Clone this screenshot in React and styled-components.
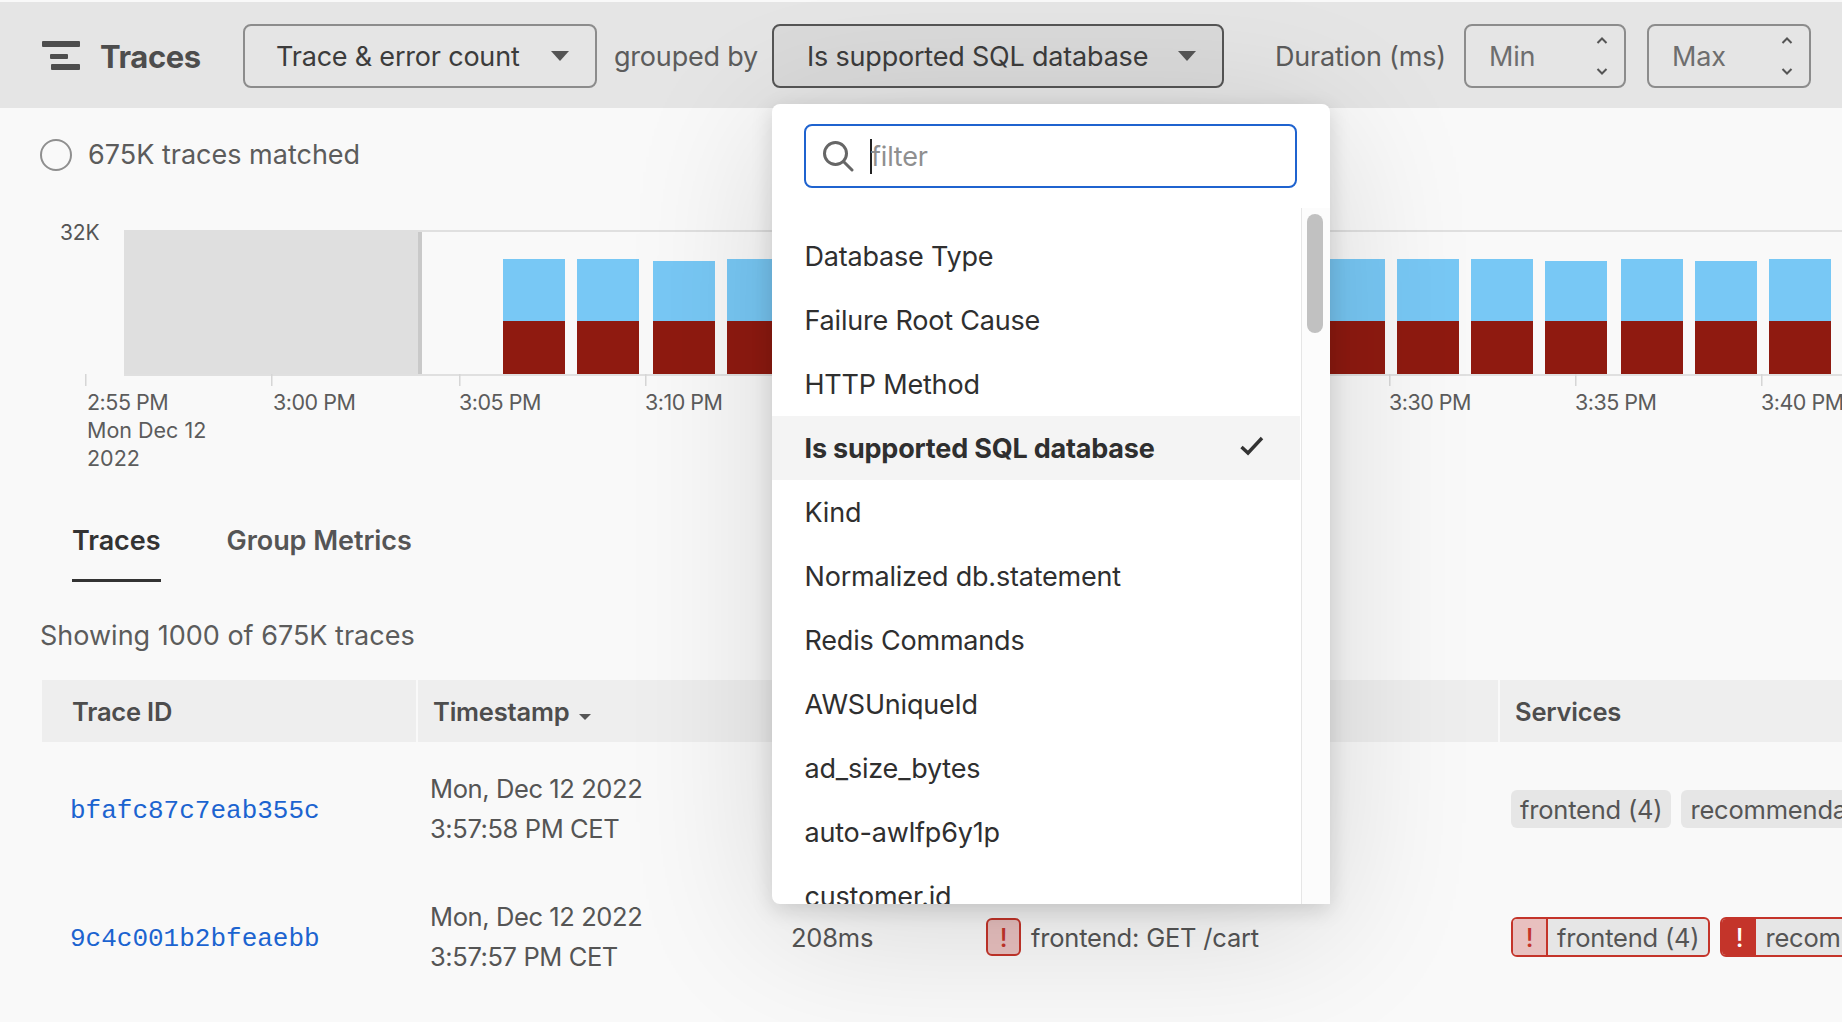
import React from "react";
import styled, { createGlobalStyle } from "styled-components";

const Global = createGlobalStyle`
  html, body { margin: 0; padding: 0; background: #f9f9f9; }
  body { font-family: Inter, "Liberation Sans", sans-serif; color: #4a4a4a; }
  * { box-sizing: border-box; }
`;

const Page = styled.div`
  position: relative;
  width: 1842px;
  height: 1022px;
  overflow: hidden;
  padding-top: 2px;
  font-size: 27px;
  letter-spacing: -0.2px;
`;

const Toolbar = styled.header`
  height: 106px;
  background: #e5e5e5;
  display: flex;
  align-items: center;
  padding: 2px 0 0 42px;
`;
const Logo = styled.svg`
  width: 38px;
  height: 30px;
  flex: none;
  margin-right: 20px;
`;
const Title = styled.h1`
  margin: 0 42px 0 0;
  width: 101px;
  font-size: 31px;
  font-weight: 700;
  letter-spacing: -0.4px;
  color: #4d4d4d;
  white-space: nowrap;
`;
const Select = styled.div`
  flex: none;
  height: 64px;
  width: ${(p) => p.$w}px;
  padding: 0 26px 0 ${(p) => p.$pl}px;
  display: flex;
  align-items: center;
  justify-content: space-between;
  border-radius: 8px;
  border: 2px solid ${(p) => (p.$open ? "#555" : "#8c8c8c")};
  background: ${(p) => (p.$open ? "#dadada" : "transparent")};
  color: #3c3c3c;
  white-space: nowrap;
  margin-right: ${(p) => p.$mr}px;
`;
const Caret = styled.span`
  flex: none;
  width: 0;
  height: 0;
  border-left: 9px solid transparent;
  border-right: 9px solid transparent;
  border-top: 10px solid #555;
`;
const Label = styled.span`
  flex: none;
  width: ${(p) => p.$w}px;
  margin-right: ${(p) => p.$mr}px;
  color: #5c5c5c;
  white-space: nowrap;
`;
const NumInput = styled.div`
  flex: none;
  width: ${(p) => p.$w}px;
  height: 64px;
  margin-right: ${(p) => p.$mr}px;
  border: 2px solid #8c8c8c;
  border-radius: 8px;
  padding: 0 15px 0 23px;
  display: flex;
  align-items: center;
  justify-content: space-between;
  color: #6e6e6e;
`;
const Steppers = styled.svg`
  width: 14px;
  height: 38px;
  flex: none;
`;

const Status = styled.div`
  height: 92px;
  margin-bottom: 2px;
  display: flex;
  align-items: center;
  padding-left: 40px;
  gap: 16px;
  color: #5c5c5c;
  letter-spacing: 0;
`;
const Spinner = styled.span`
  flex: none;
  width: 32px;
  height: 32px;
  margin-top: 2px;
  border-radius: 50%;
  border: 2px solid #8f8f8f;
`;

const Chart = styled.section`
  position: relative;
  padding-top: 28px;
`;
const YLabel = styled.span`
  position: absolute;
  left: 60px;
  top: 17px;
  font-size: 21px;
  line-height: 28px;
  color: #555;
`;
const Plot = styled.svg`
  display: block;
  width: 1842px;
  height: 156px;
`;
const XAxis = styled.div`
  display: flex;
  margin-top: 2px;
  padding-left: 87px;
`;
const XLabel = styled.div`
  flex: none;
  width: 186px;
  padding-right: 30px;
  font-size: 21.5px;
  line-height: 28px;
  letter-spacing: -0.5px;
  color: #5c5c5c;
`;
const XDate = styled.span`
  letter-spacing: 0;
`;

const Tabs = styled.nav`
  display: flex;
  gap: 66px;
  margin-top: 27px;
  padding-left: 72px;
`;
const Tab = styled.div`
  padding: 25px 0 21px;
  line-height: 34px;
  font-weight: 600;
  letter-spacing: -0.05px;
  border-bottom: 3px solid ${(p) => (p.$active ? "#333" : "transparent")};
  color: ${(p) => (p.$active ? "#333" : "#555")};
`;
const Summary = styled.div`
  margin-top: 37px;
  padding-left: 40px;
  line-height: 34px;
  color: #5c5c5c;
  letter-spacing: 0;
`;

const Table = styled.div`
  margin: 27px 0 0 42px;
  font-size: 25.5px;
`;
const COLS = "376px 358px 200px 524px 400px";
const HeadRow = styled.div`
  display: grid;
  grid-template-columns: ${COLS};
  height: 62px;
  margin-bottom: 3px;
`;
const HeadCell = styled.div`
  display: flex;
  align-items: center;
  gap: 10px;
  padding-left: ${(p) => p.$pl || 15}px;
  background: #eeeeee;
  border-right: 2px solid #f9f9f9;
  font-weight: 600;
  color: #4d4d4d;
  white-space: nowrap;
`;
const SortCaret = styled.span`
  width: 0;
  height: 0;
  margin-top: 12px;
  border-left: 6px solid transparent;
  border-right: 6px solid transparent;
  border-top: 6px solid #555;
`;
const Row = styled.div`
  display: grid;
  grid-template-columns: ${COLS};
  height: 128px;
  align-items: center;
`;
const Cell = styled.div`
  display: flex;
  align-items: center;
  padding-left: ${(p) => p.$pl || 0}px;
  gap: ${(p) => p.$gap || 0}px;
  white-space: nowrap;
  color: #555;
  min-width: 0;
`;
const TraceLink = styled.a`
  margin-top: 4px;
  font-family: "Liberation Mono", "DejaVu Sans Mono", monospace;
  font-size: 26px;
  letter-spacing: 0;
  color: #1c64d0;
`;
const Stamp = styled.div`
  line-height: 40px;
  letter-spacing: -0.4px;
`;
const ErrBox = styled.span`
  flex: none;
  width: 35px;
  height: 38px;
  display: flex;
  align-items: center;
  justify-content: center;
  border: 2px solid #c4342a;
  border-radius: 6px;
  background: #e8c0bf;
  color: #c4342a;
  font-weight: 500;
`;
const Pill = styled.span`
  flex: none;
  height: ${(p) => (p.$err ? 40 : 38)}px;
  display: inline-flex;
  align-items: stretch;
  border-radius: 6px;
  background: #e6e6e6;
  border: ${(p) => (p.$err ? "2px solid #c4342a" : "none")};
  overflow: hidden;
  color: #555;
`;
const PillFlag = styled.span`
  flex: none;
  width: ${(p) => (p.$solid ? 34 : 35)}px;
  display: flex;
  align-items: center;
  justify-content: center;
  background: ${(p) => (p.$solid ? "#c4342a" : "#e8c0bf")};
  color: ${(p) => (p.$solid ? "#fff" : "#c4342a")};
  border-right: ${(p) => (p.$solid ? "none" : "2px solid #c4342a")};
  font-weight: 500;
`;
const PillText = styled.span`
  display: flex;
  align-items: center;
  padding: 0 9px;
`;

const Dropdown = styled.div`
  position: absolute;
  left: 772px;
  top: 104px;
  width: 558px;
  height: 800px;
  background: #fff;
  border-radius: 8px 8px 0 8px;
  box-shadow: 0 6px 22px rgba(0, 0, 0, 0.14), 0 24px 150px rgba(0, 0, 0, 0.14);
  overflow: hidden;
  display: flex;
  flex-direction: column;
`;
const SearchWrap = styled.div`
  flex: none;
  padding: 20px 33px 20px 32px;
`;
const Search = styled.div`
  height: 64px;
  border: 2px solid #1f63cf;
  border-radius: 8px;
  display: flex;
  align-items: center;
  padding-left: 16px;
`;
const SearchIcon = styled.svg`
  flex: none;
  width: 32px;
  height: 32px;
  margin-right: 16px;
`;
const Cursor = styled.span`
  flex: none;
  width: 2px;
  height: 35px;
  background: #222;
  margin-right: -1px;
`;
const Placeholder = styled.span`
  color: #8f8f8f;
`;
const ListArea = styled.div`
  flex: 1;
  min-height: 0;
  display: flex;
`;
const List = styled.div`
  flex: none;
  width: 528px;
  padding-top: 16px;
`;
const Item = styled.div`
  height: 64px;
  display: flex;
  align-items: center;
  justify-content: space-between;
  padding: 0 36px 0 32.5px;
  white-space: nowrap;
  font-weight: ${(p) => (p.$selected ? 700 : 400)};
  background: ${(p) => (p.$selected ? "#f4f4f4" : "transparent")};
  color: #2f2f2f;
`;
const Check = styled.svg`
  flex: none;
  width: 24px;
  height: 20px;
  margin-bottom: 4px;
`;
const Track = styled.div`
  flex: none;
  width: 29px;
  margin-left: 1px;
  padding: 6px 5px 0 5px;
  background: #fcfcfc;
  border-left: 1px solid #e6e6e6;
`;
const Thumb = styled.div`
  width: 16px;
  height: 119px;
  border-radius: 8px;
  background: #c1c1c1;
`;

const items = [
  "Database Type", "Failure Root Cause", "HTTP Method", "Is supported SQL database", "Kind",
  "Normalized db.statement", "Redis Commands", "AWSUniqueId", "ad_size_bytes", "auto-awlfp6y1p", "customer.id",
];
const barStarts = [503, 577, 653, 727, 801, 875, 949, 1024, 1098, 1172, 1248, 1323, 1397, 1471, 1545, 1621, 1695, 1769];
const shortBars = new Set([653, 1545, 1695]);
const ticks = [85, 271, 459, 645, 831, 1017, 1203, 1389, 1575, 1761];
const times = ["3:00 PM", "3:05 PM", "3:10 PM", "3:15 PM", "3:20 PM", "3:25 PM", "3:30 PM", "3:35 PM", "3:40 PM"];

export default function App() {
  return (
    <Page>
      <Global />
      <Toolbar>
        <Logo viewBox="0 0 38 30">
          <rect x="0" y="0" width="38" height="6" rx="1" fill="#4d4d4d" />
          <rect x="8" y="13" width="18" height="5" rx="1" fill="#4d4d4d" />
          <rect x="9" y="23" width="29" height="6" rx="1" fill="#4d4d4d" />
        </Logo>
        <Title>Traces</Title>
        <Select $w={354} $mr={17} $pl={31}>Trace &amp; error count<Caret /></Select>
        <Label $w={142} $mr={16}>grouped by</Label>
        <Select $w={452} $mr={51} $pl={33} $open>Is supported SQL database<Caret /></Select>
        <Label $w={171} $mr={18}>Duration (ms)</Label>
        <NumInput $w={162} $mr={21}>Min
          <Steppers viewBox="0 0 14 38" fill="none" stroke="#555" strokeWidth="2">
            <path d="M2.5 6 L7 1.5 L11.5 6" />
            <path d="M2.5 32 L7 36.5 L11.5 32" />
          </Steppers>
        </NumInput>
        <NumInput $w={164} $mr={0}>Max
          <Steppers viewBox="0 0 14 38" fill="none" stroke="#555" strokeWidth="2">
            <path d="M2.5 6 L7 1.5 L11.5 6" />
            <path d="M2.5 32 L7 36.5 L11.5 32" />
          </Steppers>
        </NumInput>
      </Toolbar>

      <Status><Spinner />675K traces matched</Status>

      <Chart>
        <YLabel>32K</YLabel>
        <Plot viewBox="0 230 1842 156">
          <rect x="124" y="230" width="1718" height="2" fill="#e0e0e0" />
          <rect x="124" y="230" width="294" height="146" fill="#dfdfdf" />
          <rect x="418" y="232" width="4" height="142" fill="#c9c9c9" />
          <rect x="124" y="374" width="1718" height="2" fill="#e0e0e0" />
          {ticks.map((x) => (
            <rect key={x} x={x} y="374" width="1.5" height="12" fill="#d6d6d6" />
          ))}
          {barStarts.map((x) => {
            const top = shortBars.has(x) ? 261 : 259;
            return (
              <g key={x}>
                <rect x={x} y={top} width="62" height={321 - top} fill="#78c8f5" />
                <rect x={x} y="321" width="62" height="53" fill="#8f1a10" />
              </g>
            );
          })}
        </Plot>
        <XAxis>
          <XLabel>2:55 PM<br /><XDate>Mon Dec 12<br />2022</XDate></XLabel>
          {times.map((t) => <XLabel key={t}>{t}</XLabel>)}
        </XAxis>
      </Chart>

      <Tabs>
        <Tab $active>Traces</Tab>
        <Tab>Group Metrics</Tab>
      </Tabs>
      <Summary>Showing 1000 of 675K traces</Summary>

      <Table>
        <HeadRow>
          <HeadCell $pl={30}>Trace ID</HeadCell>
          <HeadCell>Timestamp<SortCaret /></HeadCell>
          <HeadCell />
          <HeadCell />
          <HeadCell>Services</HeadCell>
        </HeadRow>
        <Row>
          <Cell $pl={28}><TraceLink>bfafc87c7eab355c</TraceLink></Cell>
          <Cell $pl={12}><Stamp>Mon, Dec 12 2022<br />3:57:58 PM CET</Stamp></Cell>
          <Cell />
          <Cell />
          <Cell $pl={11} $gap={10}>
            <Pill><PillText>frontend (4)</PillText></Pill>
            <Pill><PillText>recommendationservice (2)</PillText></Pill>
          </Cell>
        </Row>
        <Row>
          <Cell $pl={28}><TraceLink>9c4c001b2bfeaebb</TraceLink></Cell>
          <Cell $pl={12}><Stamp>Mon, Dec 12 2022<br />3:57:57 PM CET</Stamp></Cell>
          <Cell $pl={15}>208ms</Cell>
          <Cell $pl={10} $gap={10}><ErrBox>!</ErrBox>frontend: GET /cart</Cell>
          <Cell $pl={11} $gap={10}>
            <Pill $err><PillFlag>!</PillFlag><PillText>frontend (4)</PillText></Pill>
            <Pill $err><PillFlag $solid>!</PillFlag><PillText>recommendationservice (2)</PillText></Pill>
          </Cell>
        </Row>
      </Table>

      <Dropdown>
        <SearchWrap>
          <Search>
            <SearchIcon viewBox="0 0 32 32" fill="none" stroke="#666" strokeWidth="3">
              <circle cx="13.5" cy="13.5" r="11" />
              <path d="M21.5 21.5 L30 30" strokeLinecap="round" />
            </SearchIcon>
            <Cursor />
            <Placeholder>filter</Placeholder>
          </Search>
        </SearchWrap>
        <ListArea>
          <List>
            {items.map((it) => {
              const sel = it === "Is supported SQL database";
              return (
                <Item key={it} $selected={sel}>
                  {it}
                  {sel && (
                    <Check viewBox="0 0 24 20" fill="none" stroke="#333" strokeWidth="3.4">
                      <path d="M1.5 11 L8 17 L22 2" />
                    </Check>
                  )}
                </Item>
              );
            })}
          </List>
          <Track><Thumb /></Track>
        </ListArea>
      </Dropdown>
    </Page>
  );
}
